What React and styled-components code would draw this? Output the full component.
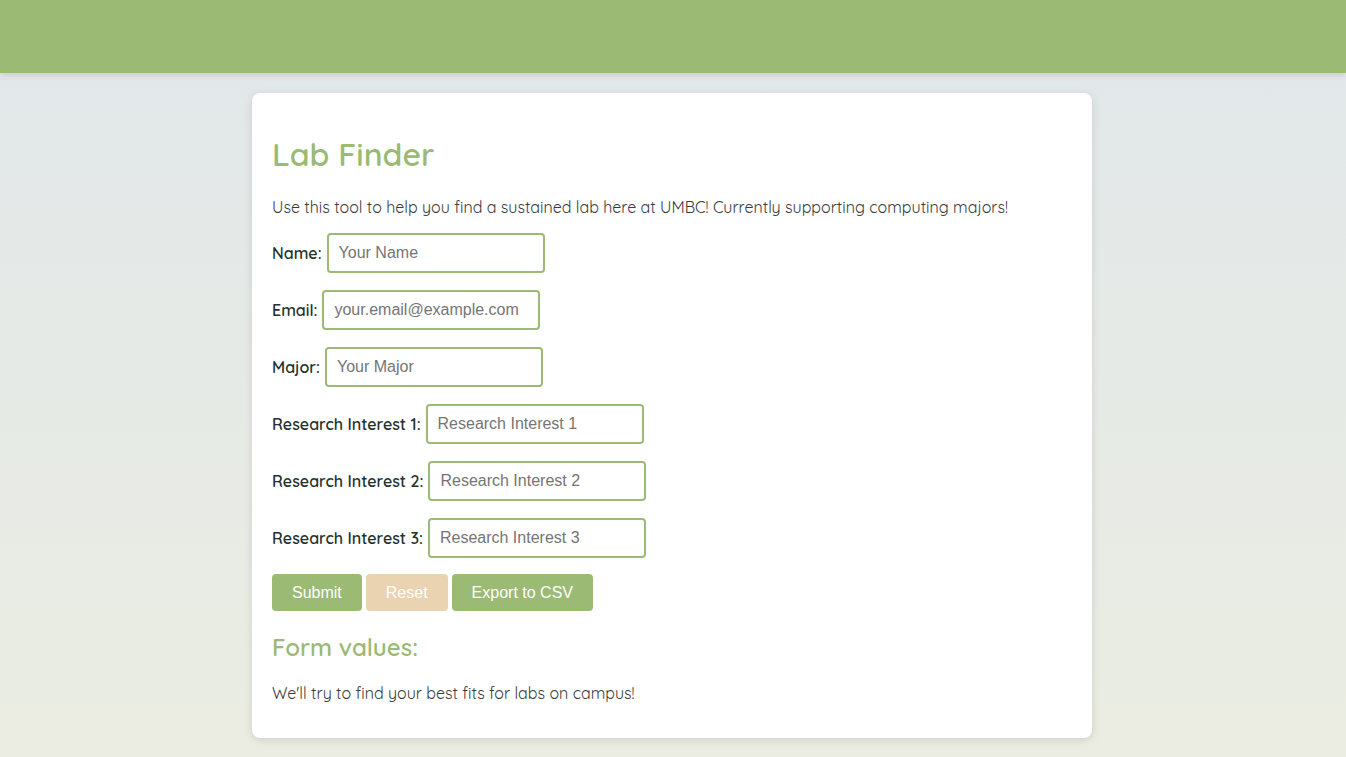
import React from 'react';
import styled, { createGlobalStyle } from 'styled-components';

const GlobalStyle = createGlobalStyle`
  html, body {
    margin: 0;
    padding: 0;
  }
  body {
    min-height: 757px;
    background: linear-gradient(180deg, #e1e7ea 0%, #ebede2 100%);
    font-family: 'Quicksand', 'Inter', sans-serif;
    color: #333;
  }
`;

const Header = styled.header`
  height: 73px;
  background: #9bba74;
  box-shadow: 0 2px 6px rgba(0, 0, 0, 0.12);
`;

const Main = styled.main`
  display: flex;
  justify-content: center;
  padding: 20px 2px 19px 0;
`;

const Card = styled.section`
  width: 840px;
  box-sizing: border-box;
  background: #fff;
  border-radius: 8px;
  box-shadow: 0 2px 8px rgba(0, 0, 0, 0.12);
  padding: 30px 20px 35px;
`;

const Title = styled.h1`
  margin: 0 0 12px;
  font-size: 32px;
  font-weight: 600;
  line-height: 62px;
  color: #9bba74;
`;

const Text = styled.p`
  margin: 0;
  font-size: 16px;
  line-height: 20px;
  color: #3a3a3a;
`;

const Form = styled.form`
  display: flex;
  flex-direction: column;
  gap: 17px;
  margin-top: 16px;
`;

const Row = styled.div`
  display: flex;
  align-items: center;
  gap: 5px;
`;

const Label = styled.label`
  font-size: 16px;
  font-weight: 600;
  color: #23322e;
`;

const Input = styled.input`
  width: 218px;
  height: 40px;
  box-sizing: border-box;
  border: 2px solid #9bba74;
  border-radius: 4px;
  padding: 0 10px;
  font-family: 'Liberation Sans', Arial, sans-serif;
  font-size: 16px;
  color: #333;
  outline: none;

  &::placeholder {
    color: #757575;
  }
`;

const Buttons = styled.div`
  display: flex;
  gap: 4px;
  margin-top: -1px;
`;

const Button = styled.button`
  height: 37px;
  padding: 0 20px;
  border: none;
  border-radius: 4px;
  background: ${p => p.$bg || '#9bba74'};
  color: #fff;
  font-family: 'Liberation Sans', Arial, sans-serif;
  font-size: 16px;
  cursor: pointer;
`;

const SubTitle = styled.h2`
  margin: 18px 0 18px;
  font-size: 24px;
  font-weight: 600;
  line-height: 36px;
  color: #9bba74;
`;

const fields = [
  ['Name', 'Your Name'],
  ['Email', 'your.email@example.com'],
  ['Major', 'Your Major'],
  ['Research Interest 1', 'Research Interest 1'],
  ['Research Interest 2', 'Research Interest 2'],
  ['Research Interest 3', 'Research Interest 3'],
];

export default function App() {
  return (
    <>
      <GlobalStyle />
      <Header />
      <Main>
        <Card>
          <Title>Lab Finder</Title>
          <Text>
            Use this tool to help you find a sustained lab here at UMBC! Currently supporting computing majors!
          </Text>
          <Form onSubmit={e => e.preventDefault()}>
            {fields.map(([label, ph]) => (
              <Row key={label}>
                <Label>{label}:</Label>
                <Input placeholder={ph} />
              </Row>
            ))}
            <Buttons>
              <Button type="submit">Submit</Button>
              <Button type="button" $bg="#ead3b0">Reset</Button>
              <Button type="button">Export to CSV</Button>
            </Buttons>
          </Form>
          <SubTitle>Form values:</SubTitle>
          <Text>We'll try to find your best fits for labs on campus!</Text>
        </Card>
      </Main>
    </>
  );
}
